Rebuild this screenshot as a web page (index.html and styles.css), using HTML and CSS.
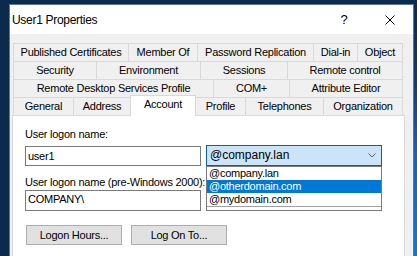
FILE: index.html
```html
<!DOCTYPE html>
<html lang="en">
<head>
  <meta charset="UTF-8" />
  <title>User1 Properties</title>
  <link rel="stylesheet" href="styles.css">
</head>
<body>
  <div class="window">
    <!-- Title bar -->
    <div class="titlebar">
      <span class="title">User1 Properties</span>
      <span class="tb-btn help">?</span>
      <span class="tb-btn close">
        <svg width="10" height="10" viewBox="0 0 10 10">
          <path d="M0.5 0.5 L9.5 9.5 M9.5 0.5 L0.5 9.5" stroke="#000" stroke-width="1" fill="none" />
        </svg>
      </span>
    </div>

    <div class="content">
      <!-- Tabs -->
      <div class="tabs">
        <div class="tab-row row1">
          <div class="tab">Published Certificates</div>
          <div class="tab">Member Of</div>
          <div class="tab">Password Replication</div>
          <div class="tab">Dial-in</div>
          <div class="tab">Object</div>
        </div>
        <div class="tab-row row2">
          <div class="tab">Security</div>
          <div class="tab">Environment</div>
          <div class="tab">Sessions</div>
          <div class="tab">Remote control</div>
        </div>
        <div class="tab-row row3">
          <div class="tab">Remote Desktop Services Profile</div>
          <div class="tab">COM+</div>
          <div class="tab">Attribute Editor</div>
        </div>
        <div class="tab-row row4">
          <div class="tab">General</div>
          <div class="tab">Address</div>
          <div class="tab active">Account</div>
          <div class="tab">Profile</div>
          <div class="tab">Telephones</div>
          <div class="tab">Organization</div>
        </div>
      </div>

      <!-- Account page -->
      <div class="panel">
        <div class="label">User logon name:</div>
        <div class="field-row">
          <div class="input">user1</div>
          <div class="combo">
            <span>@company.lan</span>
            <svg width="8" height="5" viewBox="0 0 8 5">
              <path d="M0.5 0.5 L4 4 L7.5 0.5" stroke="#606060" stroke-width="1" fill="none" />
            </svg>
          </div>
        </div>
        <div class="label label2">User logon name (pre-Windows 2000):</div>
        <div class="input input2">COMPANY\</div>
        <div class="buttons">
          <div class="button">Logon Hours...</div>
          <div class="button">Log On To...</div>
        </div>

        <!-- Open dropdown -->
        <div class="dropdown">
          <div class="item">@company.lan</div>
          <div class="item selected">@otherdomain.com</div>
          <div class="item">@mydomain.com</div>
          <div class="dropdown-foot"></div>
        </div>
      </div>
    </div>
  </div>
</body>
</html>
```

FILE: styles.css
```css
* {
  box-sizing: border-box;
  margin: 0;
  padding: 0;
}

body {
  height: 256px;
  overflow: hidden;
  background:
    linear-gradient(#0c2a4f 0%, #0e3a70 30%, #1562b8 60%, #0a78d7 100%) right top / 3px 100% no-repeat,
    #0b2a4e;
  font-family: "Liberation Sans", Arial, sans-serif;
  font-size: 11px;
  letter-spacing: -0.25px;
  color: #000;
}

/* Window */
.window {
  margin: 4px 0 0 9px;
  width: 405px;
  height: 252px;
  overflow: hidden;
  background: #f0f0f0;
  border: 1px solid #5b7896;
  border-bottom: none;
}

.titlebar {
  display: flex;
  align-items: center;
  height: 29px;
  background: #fff;
}

.title {
  flex: 1;
  padding-left: 2px;
  font-size: 12px;
  letter-spacing: -0.3px;
}

.tb-btn {
  width: 46px;
  display: flex;
  justify-content: center;
  align-items: center;
  height: 29px;
}

.help {
  font-size: 13px;
  letter-spacing: 0;
}

.content {
  padding: 9px 8px 0 2px;
}

/* Tabs */
.tabs {
  margin-left: 1px;
  width: 390px;
}

.tab-row {
  display: grid;
  height: 18px;
}

.row1 { grid-template-columns: 115px 69px 116px 44px 46px; }
.row2 { grid-template-columns: 83px 104px 87px 116px; }
.row3 { grid-template-columns: 200px 76px 114px; }
.row4 { grid-template-columns: 60px 57px 65px 50px 78px 80px; }

.tab {
  background: #f0f0f0;
  border-top: 1px solid #d9d9d9;
  border-left: 1px solid #d9d9d9;
  text-align: center;
  line-height: 17px;
  white-space: nowrap;
}

.tab:last-child {
  border-right: 1px solid #d9d9d9;
}

.tab.active {
  position: relative;
  z-index: 1;
  margin: -2px -1px -1px 0;
  background: #fff;
  border-right: 1px solid #d9d9d9;
}

/* Panel */
.panel {
  position: relative;
  height: 150px;
  background: #fff;
  border: 1px solid #d9d9d9;
  padding: 12px 0 0 12px;
}

.label {
  line-height: 13px;
  white-space: nowrap;
}

.label2 {
  margin-top: 10px;
}

.field-row {
  display: flex;
  align-items: flex-end;
  gap: 5px;
  margin-top: 4px;
}

.input {
  width: 176px;
  height: 20px;
  border: 1px solid #7a7a7a;
  padding-left: 2px;
  line-height: 18px;
  background: #fff;
}

.input2 {
  margin-top: 1px;
  height: 21px;
  line-height: 17px;
}

.combo {
  width: 176px;
  height: 21px;
  display: flex;
  align-items: center;
  justify-content: space-between;
  padding: 0 5px 0 3px;
  background: #cce4f7;
  border: 1px solid #0c5ea8;
  font-size: 12px;
  letter-spacing: 0;
  line-height: 19px;
}

.buttons {
  display: flex;
  gap: 9px;
  margin: 14px 0 0 1px;
}

.button {
  width: 96px;
  height: 20px;
  background: #e1e1e1;
  border: 1px solid #adadad;
  text-align: center;
  line-height: 18px;
}

/* Dropdown list */
.dropdown {
  position: absolute;
  left: 193px;
  top: 50px;
  width: 176px;
  background: #fff;
  border: 1px solid #7a7a7a;
}

.item {
  height: 13px;
  line-height: 13px;
  padding-left: 2px;
}

.item.selected {
  background: #0078d7;
  color: #fff;
}

.dropdown-foot {
  height: 4px;
  border-top: 1px solid #a0a0a0;
}
```
